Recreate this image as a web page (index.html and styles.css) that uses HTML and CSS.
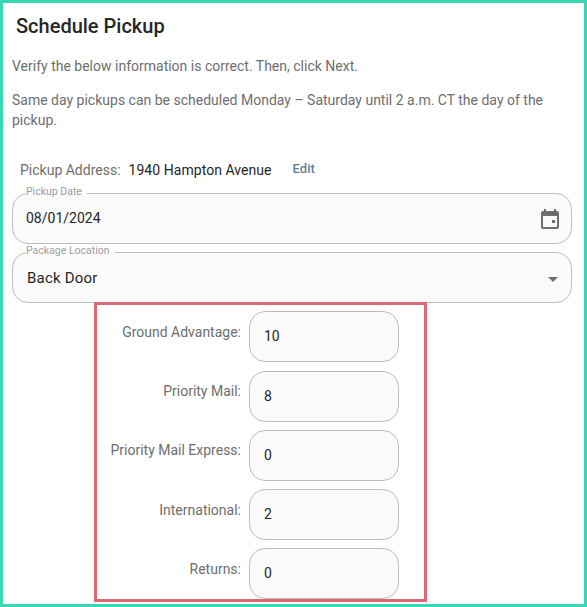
FILE: index.html
```html
<!DOCTYPE html>
<html lang="en">
<head>
  <meta charset="UTF-8" />
  <meta name="viewport" content="width=device-width, initial-scale=1.0" />
  <title>Schedule Pickup</title>
  <link rel="stylesheet" href="styles.css">
</head>
<body>
  <div class="frame">
    <h1>Schedule Pickup</h1>
    <p class="intro">Verify the below information is correct. Then, click Next.</p>
    <p class="intro second">Same day pickups can be scheduled Monday – Saturday until 2 a.m. CT the day of the pickup.</p>

    <div class="address">
      <span class="address-label">Pickup Address:</span>
      <span class="address-value">1940 Hampton Avenue</span>
      <a class="edit" href="#">Edit</a>
    </div>

    <fieldset class="outlined date-field">
      <legend>Pickup Date</legend>
      <span class="value">08/01/2024</span>
      <svg class="calendar" viewBox="0 0 24 24" width="24" height="24">
        <path fill="#6e6e6e" d="M19 4h-1V2h-2v2H8V2H6v2H5c-1.11 0-1.99.9-1.99 2L3 20c0 1.1.89 2 2 2h14c1.1 0 2-.9 2-2V6c0-1.1-.9-2-2-2zm0 16H5V9h14v11zm-5-7h3v3h-3z"/>
      </svg>
    </fieldset>

    <fieldset class="outlined location-field">
      <legend>Package Location</legend>
      <span class="value location">Back Door</span>
      <span class="caret"></span>
    </fieldset>

    <div class="counts">
      <div class="count-row row-a"><label>Ground Advantage:</label><div class="count-input">10</div></div>
      <div class="count-row row-b"><label>Priority Mail:</label><div class="count-input">8</div></div>
      <div class="count-row row-b"><label>Priority Mail Express:</label><div class="count-input">0</div></div>
      <div class="count-row row-b"><label class="lowered">International:</label><div class="count-input">2</div></div>
      <div class="count-row row-b"><label class="lowered">Returns:</label><div class="count-input">0</div></div>
    </div>
  </div>
</body>
</html>
```

FILE: styles.css
```css
:root {
  --teal: #3bd6b4;
  --red: #dc6a74;
  --outline: #bdbdbd;
  --field-bg: #fafafa;
  --muted: #6e6e6e;
  --dark: #262626;
}

html, body {
  margin: 0;
  height: 100%;
}

body {
  font-family: Roboto, "Liberation Sans", sans-serif;
  background-color: white;
  color: var(--dark);
}

.frame {
  box-sizing: border-box;
  height: 607px;
  border: 3px solid var(--teal);
  padding: 0 12px 0 9px;
  overflow: hidden;
}

h1 {
  margin: 0;
  padding: 10px 0 0 4px;
  font-size: 20px;
  font-weight: 500;
  line-height: 26px;
}

.intro {
  margin: 17px 0 0;
  font-size: 14px;
  line-height: 20px;
  color: var(--muted);
}

.intro.second {
  margin-top: 14px;
}

.address {
  display: flex;
  align-items: baseline;
  margin: 30px 0 0 8px;
  font-size: 14px;
  line-height: 20px;
}

.address-label {
  color: var(--muted);
}

.address-value {
  margin-left: 8px;
  letter-spacing: 0.05px;
}

.edit {
  margin-left: 21px;
  font-size: 13px;
  font-weight: 500;
  color: #5f8293;
  text-decoration: none;
  position: relative;
  top: -2px;
}

.outlined {
  box-sizing: border-box;
  display: flex;
  align-items: center;
  justify-content: space-between;
  width: 560px;
  margin: 0;
  padding: 0 10px 0 13px;
  border: 1px solid var(--outline);
  border-radius: 16px;
  background-color: var(--field-bg);
}

.date-field {
  height: 57px;
  margin-top: 6px;
}

.location-field {
  height: 57px;
  margin-top: 2px;
}

legend {
  position: relative;
  top: -1px;
  padding: 0 5px 0 0;
  font-size: 10.5px;
  line-height: 12px;
  color: #9e9e9e;
}

.value {
  font-size: 14px;
  position: relative;
  top: -3px;
}

.value.location {
  top: -2px;
  left: 1px;
  font-size: 15px;
  letter-spacing: 0.2px;
}

.calendar {
  flex: none;
  margin-top: -5px;
  margin-right: -1px;
}

.caret {
  width: 0;
  height: 0;
  margin-top: -1px;
  margin-right: 3px;
  border-left: 5px solid transparent;
  border-right: 5px solid transparent;
  border-top: 5px solid var(--muted);
}

.counts {
  box-sizing: border-box;
  width: 333px;
  height: 300px;
  margin: -1px 0 0 82px;
  border: 3px solid var(--red);
  padding: 6px 25px 0 0;
}

.count-row {
  display: flex;
  justify-content: flex-end;
  gap: 8px;
}

.row-a {
  margin-bottom: 9px;
}

.row-b {
  margin-top: 8px;
}

.count-row label {
  padding-top: 11px;
  font-size: 14px;
  line-height: 20px;
  color: var(--muted);
}

.row-b label {
  padding-top: 10px;
}

.row-b label.lowered {
  padding-top: 11px;
}

.count-input {
  box-sizing: border-box;
  display: flex;
  align-items: center;
  width: 150px;
  height: 51px;
  padding: 0 14px 1px;
  border: 1px solid var(--outline);
  border-radius: 16px;
  background-color: var(--field-bg);
  font-size: 14px;
}
```
